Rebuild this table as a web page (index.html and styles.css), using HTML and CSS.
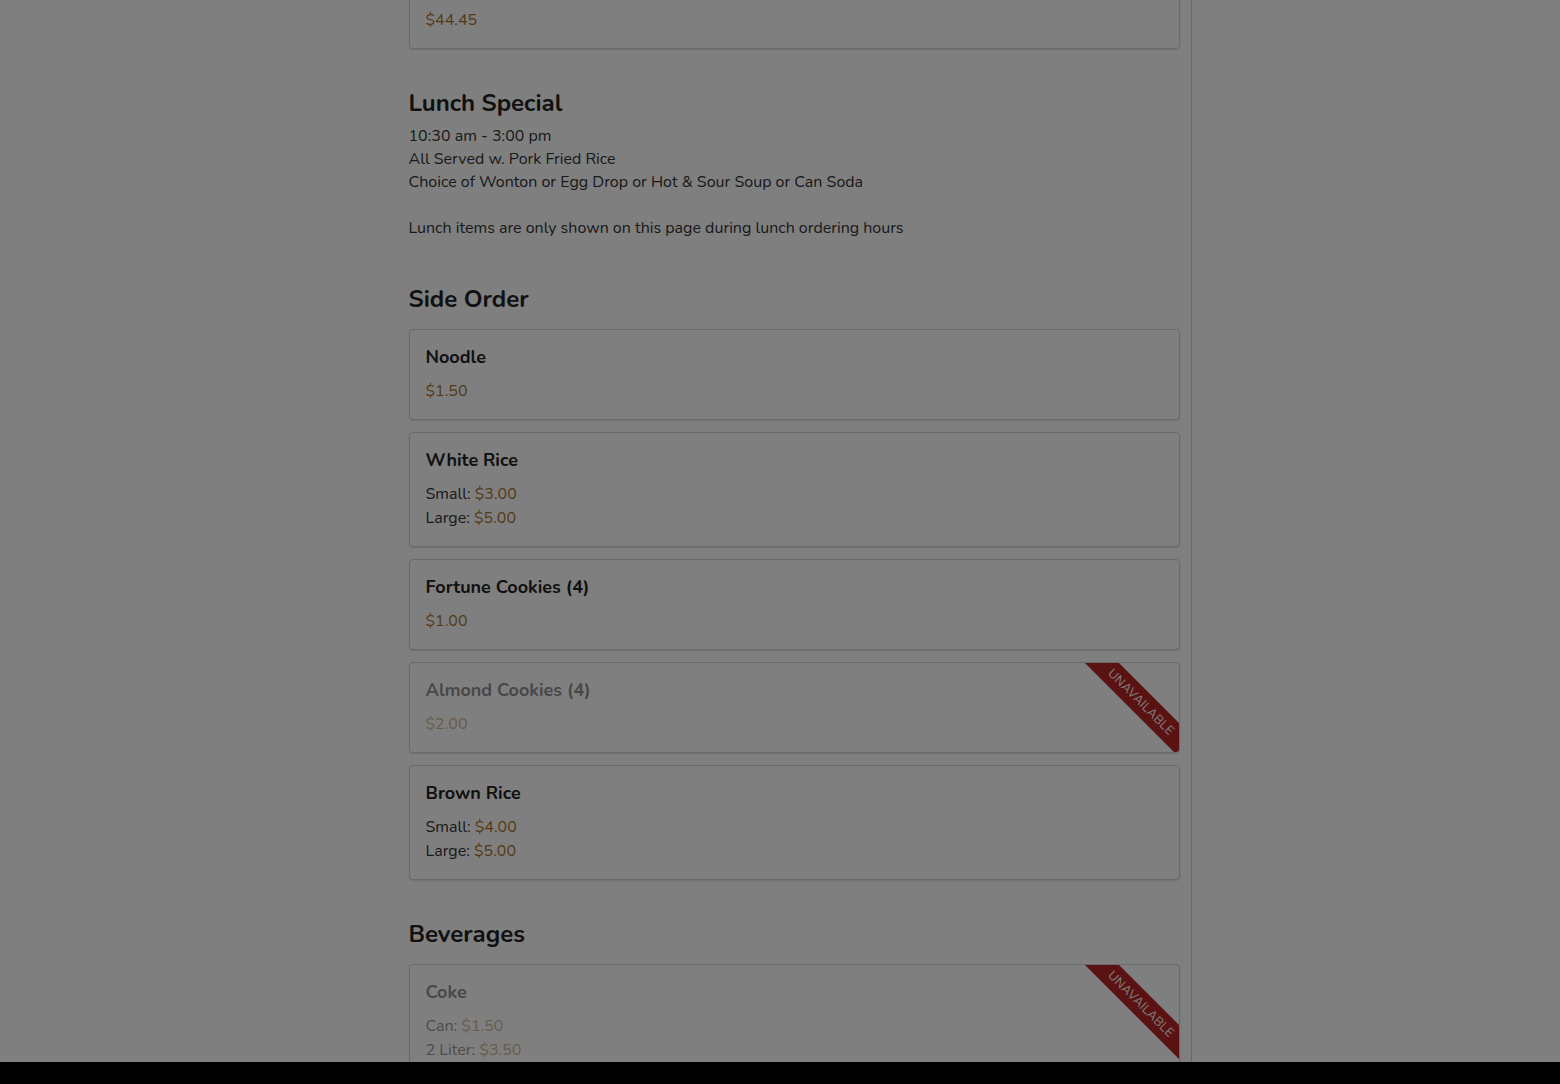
FILE: index.html
```html
<!DOCTYPE html>
<html lang="en">
<head>
    <meta charset="UTF-8">
    <meta name="viewport" content="width=device-width, initial-scale=1.0">
    <title>Menu</title>
    <link rel="stylesheet" href="styles.css">
</head>
<body>
    <div class="page">
        <main class="menu">
            <section class="category first">
                <div class="items">
                    <div class="item">
                        <h3 class="item-name">Family Dinner for 4</h3>
                        <div class="price-line"><span class="price">$44.45</span></div>
                    </div>
                </div>
            </section>

            <section class="category">
                <h2>Lunch Special</h2>
                <p class="note">10:30 am - 3:00 pm<br>All Served w. Pork Fried Rice<br>Choice of Wonton or Egg Drop or Hot &amp; Sour Soup or Can Soda<br><br>Lunch items are only shown on this page during lunch ordering hours</p>
            </section>

            <section class="category">
                <h2>Side Order</h2>
                <div class="items">
                    <div class="item">
                        <h3 class="item-name">Noodle</h3>
                        <div class="price-line"><span class="price">$1.50</span></div>
                    </div>
                    <div class="item">
                        <h3 class="item-name">White Rice</h3>
                        <div class="price-line">Small: <span class="price">$3.00</span></div>
                        <div class="price-line">Large: <span class="price">$5.00</span></div>
                    </div>
                    <div class="item">
                        <h3 class="item-name">Fortune Cookies (4)</h3>
                        <div class="price-line"><span class="price">$1.00</span></div>
                    </div>
                    <div class="item unavailable">
                        <div class="item-body">
                            <h3 class="item-name">Almond Cookies (4)</h3>
                            <div class="price-line"><span class="price">$2.00</span></div>
                        </div>
                        <div class="ribbon">Unavailable</div>
                    </div>
                    <div class="item">
                        <h3 class="item-name">Brown Rice</h3>
                        <div class="price-line">Small: <span class="price">$4.00</span></div>
                        <div class="price-line">Large: <span class="price">$5.00</span></div>
                    </div>
                </div>
            </section>

            <section class="category">
                <h2>Beverages</h2>
                <div class="items">
                    <div class="item unavailable">
                        <div class="item-body">
                            <h3 class="item-name">Coke</h3>
                            <div class="price-line">Can: <span class="price">$1.50</span></div>
                            <div class="price-line">2 Liter: <span class="price">$3.50</span></div>
                        </div>
                        <div class="ribbon">Unavailable</div>
                    </div>
                    <div class="item">
                        <h3 class="item-name">Sprite</h3>
                        <div class="price-line">Can: <span class="price">$1.50</span></div>
                        <div class="price-line">2 Liter: <span class="price">$3.50</span></div>
                    </div>
                </div>
            </section>
        </main>
    </div>
    <div class="backdrop"></div>
    <div class="bottom-bar"></div>
</body>
</html>
```

FILE: styles.css
```css
body {
    margin: 0;
    font-family: "Nunito", Lato, "Open Sans", sans-serif;
    font-size: 16px;
    color: #333;
    background: #fff;
    overflow: hidden;
}
.page {
    display: flex;
    justify-content: center;
    height: 1084px;
    overflow: hidden;
}
.menu {
    width: 771px;
    padding: 0 11px 0 40px;
    border-right: 1px solid #d0d0d0;
}
.category {
    margin-top: 38px;
}
.category.first {
    margin-top: -42px;
}
h2 {
    margin: 0 0 14px;
    font-size: 24px;
    line-height: 32px;
    font-weight: 700;
    color: #222;
}
.note {
    margin: -8px 0 0;
    padding-bottom: 5px;
    line-height: 23px;
}
.items {
    display: flex;
    flex-direction: column;
    gap: 12px;
}
.item {
    position: relative;
    overflow: hidden;
    padding: 16px;
    border: 1px solid #d2d2d2;
    border-radius: 4px;
    box-shadow: 0 1px 2px rgba(0, 0, 0, 0.12);
    background: #fff;
}
.item-name {
    margin: 0 0 11px;
    font-size: 18px;
    line-height: 22px;
    font-weight: 700;
    color: #222;
}
.price-line {
    line-height: 24px;
}
.price {
    color: #a8742e;
}
.unavailable .item-body {
    opacity: 0.5;
}
.ribbon {
    position: absolute;
    top: 27px;
    right: -37px;
    width: 150px;
    height: 24px;
    line-height: 24px;
    background: #b52424;
    color: #fff;
    font-size: 12.5px;
    text-transform: uppercase;
    letter-spacing: 0.2px;
    text-align: center;
    transform: rotate(45deg);
}
.backdrop {
    position: fixed;
    inset: 0;
    background: rgba(0, 0, 0, 0.5);
}
.bottom-bar {
    position: fixed;
    left: 0;
    right: 0;
    bottom: 0;
    height: 22px;
    background: #000;
}
```
